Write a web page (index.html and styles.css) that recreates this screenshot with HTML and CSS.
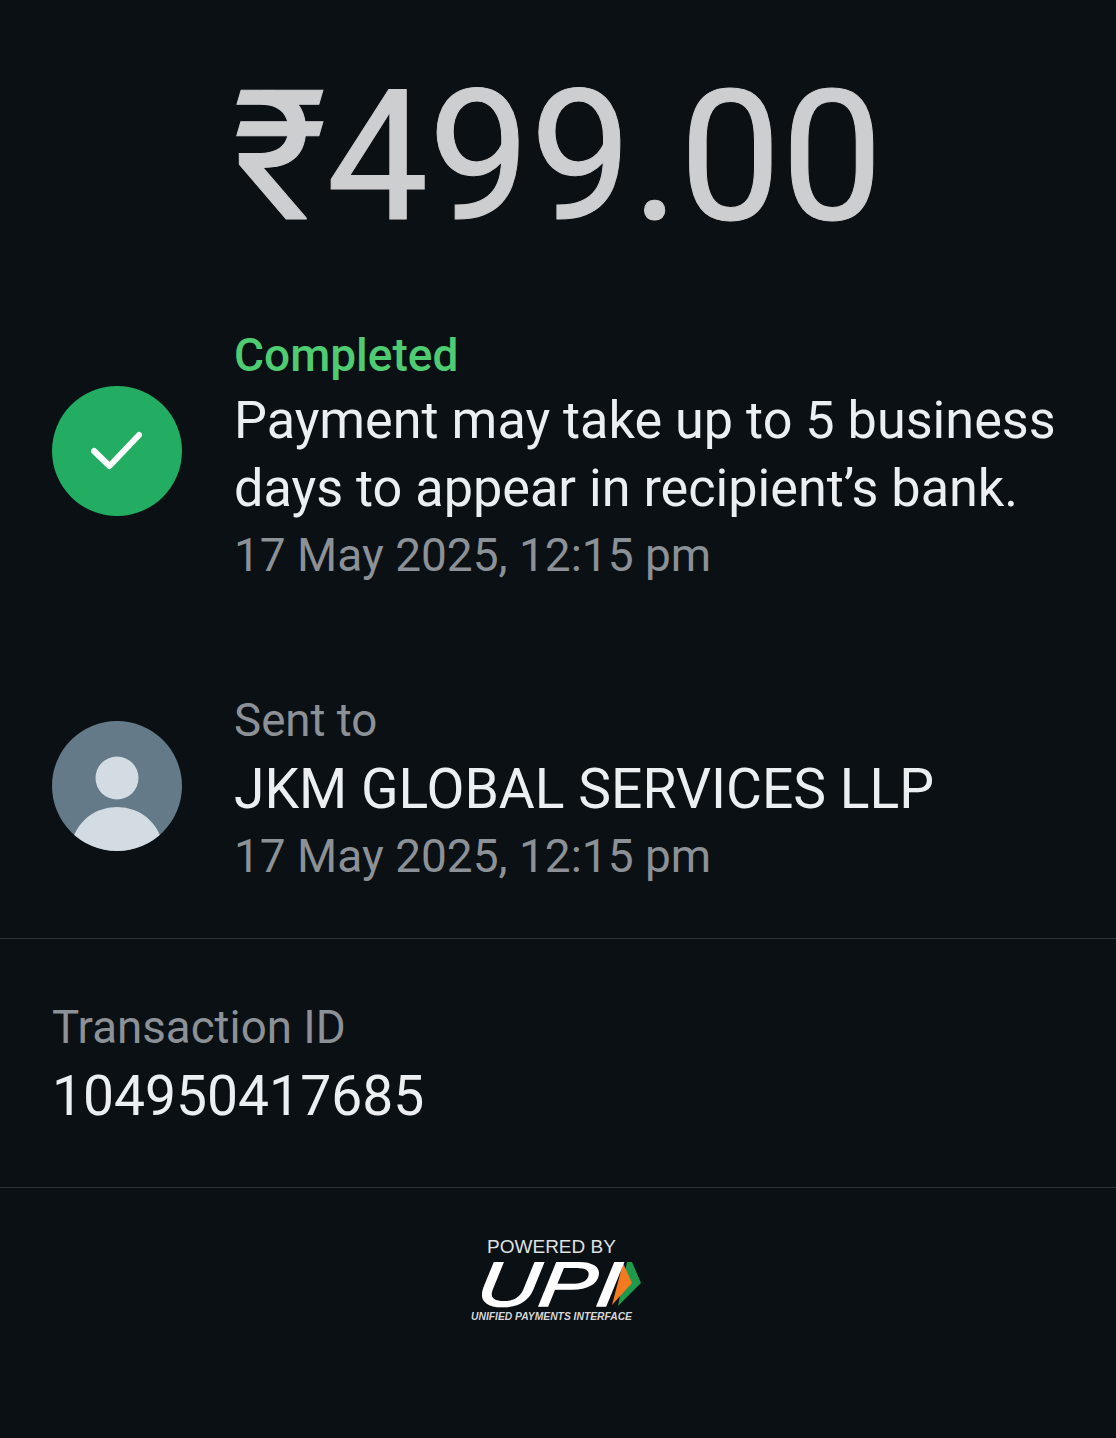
FILE: index.html
```html
<!DOCTYPE html>
<html lang="en">
<head>
<meta charset="utf-8">
<title>Payment details</title>
<link rel="stylesheet" href="styles.css">
</head>
<body>
<main class="screen">
  <h1 class="amount">₹499.00</h1>
  <section class="row status-row">
    <svg class="avatar status-icon" viewBox="0 0 130 130" aria-hidden="true">
      <circle cx="65" cy="65" r="65" fill="#22ad62"/>
      <path d="M42 65 L57.500 80 L87 49" fill="none" stroke="#fff" stroke-width="6" stroke-linecap="round" stroke-linejoin="round"/>
    </svg>
    <div class="col">
      <div class="status">Completed</div>
      <div class="sentence">Payment may take up to 5 business days to appear in recipient’s bank.</div>
      <div class="muted">17 May 2025, 12:15 pm</div>
    </div>
  </section>
  <section class="row sent-row">
    <svg class="avatar person-icon" viewBox="0 0 130 130" aria-hidden="true">
      <defs><clipPath id="disc"><circle cx="65" cy="65" r="65"/></clipPath></defs>
      <circle cx="65" cy="65" r="65" fill="#647a88"/>
      <g clip-path="url(#disc)">
        <circle cx="65" cy="57" r="21.500" fill="#d3dce2"/>
        <ellipse cx="65" cy="130" rx="46" ry="44" fill="#d3dce2"/>
      </g>
    </svg>
    <div class="col">
      <div class="label">Sent to</div>
      <div class="name">JKM GLOBAL SERVICES LLP</div>
      <div class="muted">17 May 2025, 12:15 pm</div>
    </div>
  </section>
  <section class="txn">
    <div class="label">Transaction ID</div>
    <div class="name">104950417685</div>
  </section>
  <footer class="footer">
    <div class="upi">
      <div class="powered">POWERED BY</div>
      <div class="upi-mark">
        <span class="upi-word">UPI</span>
        <svg class="upi-arrows" viewBox="0 0 32 48" aria-hidden="true">
          <path d="M17 2 L22 2 L31 23 L8 46 Z" fill="#1f9a4c"/>
          <path d="M13 3 L22 23 L2 45 Z" fill="#f47a20"/>
        </svg>
      </div>
      <div class="tagline">UNIFIED PAYMENTS INTERFACE</div>
    </div>
  </footer>
</main>
</body>
</html>
```
FILE: styles.css
```css
* { box-sizing: border-box; margin: 0; padding: 0; }
html, body { background: #0b1014; }
body { font-family: Roboto, "Liberation Sans", sans-serif; }
.screen { width: 1116px; height: 1438px; overflow: hidden; display: flex; flex-direction: column; color: #eceff1; }
.amount { font-size: 181px; font-weight: 400; line-height: 212px; color: #cdced0; text-align: center; margin-top: 51px; -webkit-text-stroke: 1px #cdced0; }
.row { display: flex; align-items: flex-start; gap: 52px; padding: 0 52px; }
.status-row { margin-top: 60px; }
.sent-row { margin-top: 102px; padding-bottom: 51px; border-bottom: 1px solid #2e3338; }
.avatar { width: 130px; height: 130px; flex: none; }
.status-icon { margin-top: 63px; }
.person-icon { margin-top: 33px; }
.col { display: flex; flex-direction: column; min-width: 0; }
.status { font-size: 46px; font-weight: 500; line-height: 64px; color: #4fcb72; }
.sentence { font-size: 52.200px; line-height: 68px; margin-bottom: 1px; color: #eceff1; }
.name { font-size: 55.200px; line-height: 71px; color: #eceff1; }
.muted { font-size: 46px; line-height: 62px; color: #8b9196; }
.label { font-size: 45.700px; line-height: 66px; color: #8b9196; }
.txn { padding: 56px 52px 55px; border-bottom: 1px solid #2e3338; display: flex; flex-direction: column; }
.footer { display: flex; justify-content: center; padding: 48px 13px 0 0; }
.upi { display: flex; flex-direction: column; align-items: center; width: 180px; }
.powered { font-family: "Liberation Sans", sans-serif; font-size: 19px; line-height: 22px; color: #dfe1e2; }
.upi-mark { display: flex; justify-content: space-between; align-items: center; width: 164px; height: 48px; margin: 2px 0 0 17px; }
.upi-word { font-family: "Liberation Sans", sans-serif; font-size: 63px; font-weight: 400; font-style: italic; line-height: 48px; color: #fff; -webkit-text-stroke: 1.500px #fff; transform: scaleX(1.36) skewX(-6deg); transform-origin: left center; }
.upi-arrows { width: 32px; height: 48px; }
.tagline { font-family: "Liberation Sans", sans-serif; font-size: 10.300px; font-weight: 700; font-style: italic; line-height: 14px; margin-top: 2px; color: #d5d7d8; white-space: nowrap; }
```
